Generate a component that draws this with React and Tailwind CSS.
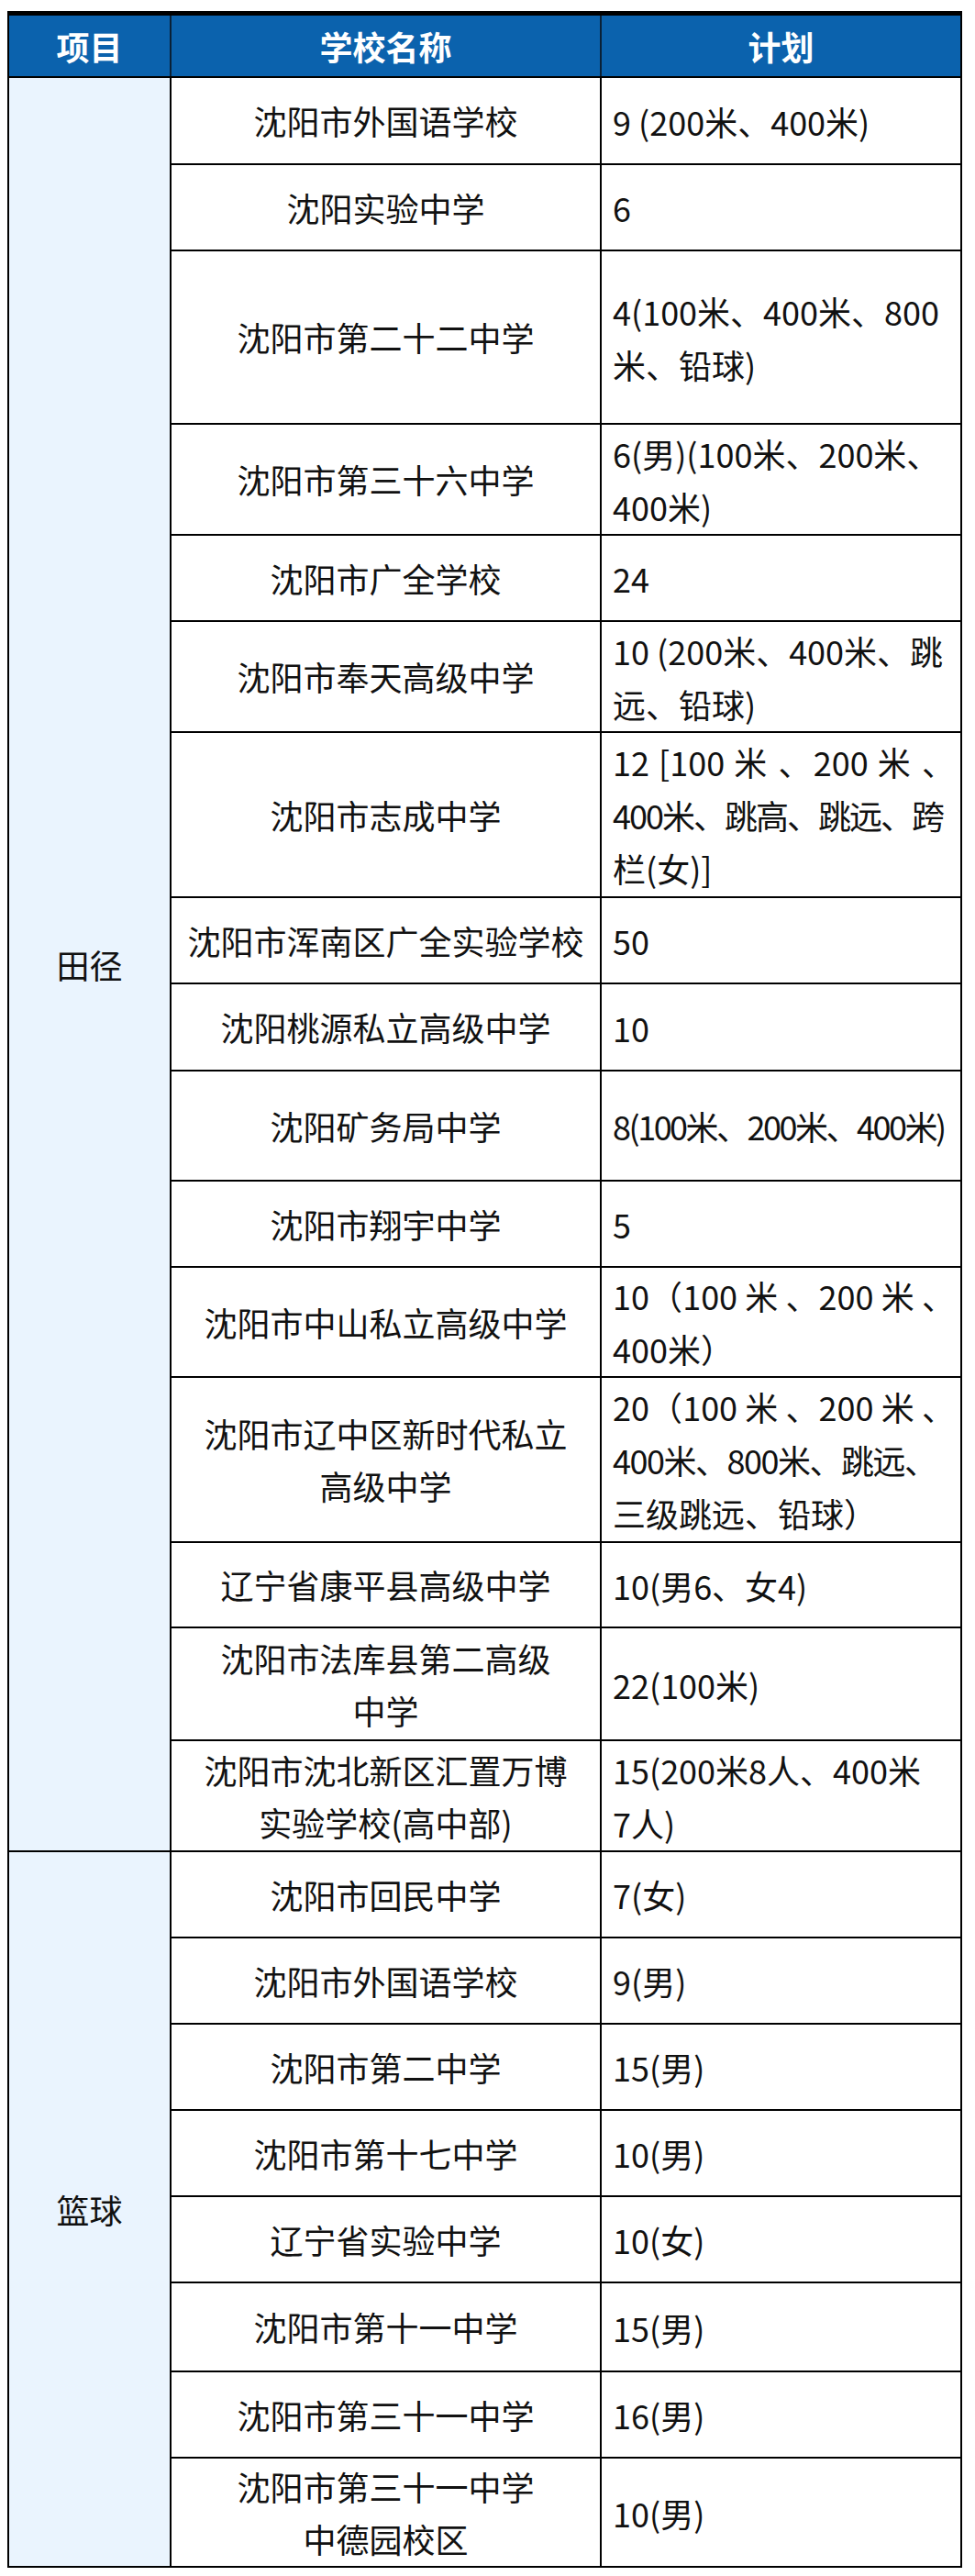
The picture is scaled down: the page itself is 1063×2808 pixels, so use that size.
// 2024 沈阳 体育特长生 招生计划表
const trackRows = [
  { h: 'h-[95px]', school: ['沈阳市外国语学校'], plan: ['9 (200米、400米)'] },
  { h: 'h-[94px]', school: ['沈阳实验中学'], plan: ['6'] },
  { h: 'h-[189px]', school: ['沈阳市第二十二中学'], plan: ['4(100米、400米、800', '米、铅球)'] },
  { h: 'h-[121px]', school: ['沈阳市第三十六中学'], plan: ['6(男)(100米、200米、', '400米)'] },
  { h: 'h-[94px]', school: ['沈阳市广全学校'], plan: ['24'] },
  { h: 'h-[121px]', school: ['沈阳市奉天高级中学'], plan: ['10 (200米、400米、跳', '远、铅球)'] },
  {
    h: 'h-[180px]',
    school: ['沈阳市志成中学'],
    plan: [['12 [100 米 、200 米 、', 'text-justify [text-align-last:justify]'], ['400米、跳高、跳远、跨', 'tracking-[-2px]'], '栏(女)]'],
  },
  { h: 'h-[94px]', school: ['沈阳市浑南区广全实验学校'], plan: ['50'] },
  { h: 'h-[95px]', school: ['沈阳桃源私立高级中学'], plan: ['10'] },
  { h: 'h-[120px]', school: ['沈阳矿务局中学'], plan: [['8(100米、200米、400米)', 'tracking-[-2.5px]']] },
  { h: 'h-[94px]', school: ['沈阳市翔宇中学'], plan: ['5'] },
  {
    h: 'h-[120px]',
    school: ['沈阳市中山私立高级中学'],
    plan: [['10（100 米 、200 米 、', 'text-justify [text-align-last:justify]'], '400米）'],
  },
  {
    h: 'h-[180px]',
    school: ['沈阳市辽中区新时代私立', '高级中学'],
    plan: [
      ['20（100 米 、200 米 、', 'text-justify [text-align-last:justify]'],
      ['400米、800米、跳远、', 'tracking-[-1.5px]'],
      '三级跳远、铅球）',
    ],
  },
  { h: 'h-[93px]', school: ['辽宁省康平县高级中学'], plan: ['10(男6、女4)'] },
  { h: 'h-[123px]', school: ['沈阳市法库县第二高级', '中学'], plan: ['22(100米)'] },
  { h: 'h-[121px]', school: ['沈阳市沈北新区汇置万博', '实验学校(高中部)'], plan: ['15(200米8人、400米', '7人)'] },
];

const basketballRows = [
  { h: 'h-[94px]', school: ['沈阳市回民中学'], plan: ['7(女)'] },
  { h: 'h-[94px]', school: ['沈阳市外国语学校'], plan: ['9(男)'] },
  { h: 'h-[94px]', school: ['沈阳市第二中学'], plan: ['15(男)'] },
  { h: 'h-[94px]', school: ['沈阳市第十七中学'], plan: ['10(男)'] },
  { h: 'h-[94px]', school: ['辽宁省实验中学'], plan: ['10(女)'] },
  { h: 'h-[97px]', school: ['沈阳市第十一中学'], plan: ['15(男)'] },
  { h: 'h-[94px]', school: ['沈阳市第三十一中学'], plan: ['16(男)'] },
  { h: 'h-[119px]', school: ['沈阳市第三十一中学', '中德园校区'], plan: ['10(男)'] },
];

const Row = ({ row }) => (
  <div className={`flex ${row.h} border-b-2 border-black`}>
    <div className="w-[469px] shrink-0 border-r-2 border-black flex flex-col items-center justify-center leading-[57px]">
      {row.school.map((line) => (
        <div key={line} className="whitespace-nowrap">{line}</div>
      ))}
    </div>
    <div className="flex-1 min-w-0 overflow-hidden pl-[12px] pr-[6px] flex flex-col justify-center leading-[58px]">
      {row.plan.map((line) => {
        const [text, cls] = Array.isArray(line) ? line : [line, ''];
        return (
          <div key={text} className={`whitespace-nowrap ${cls}`}>
            {text}
          </div>
        );
      })}
    </div>
  </div>
);

const Group = ({ label, rows }) => (
  <div className="flex">
    <div className="w-[177px] shrink-0 border-r-2 border-b-2 border-black bg-[#eaf4fe] flex items-center justify-center">
      {label}
    </div>
    <div className="flex-1 min-w-0 flex flex-col bg-white">
      {rows.map((row, i) => (
        <Row key={i} row={row} />
      ))}
    </div>
  </div>
);

export default function App() {
  return (
    <div className="bg-white min-h-[2808px] pt-[12px] pl-[8px] font-['Noto_Sans_CJK_SC','Noto_Sans',sans-serif] text-[36px] text-[#111]">
      <div className="w-[1041px] border-x-2 border-black overflow-hidden">
        {/* Header */}
        <div className="flex h-[73px] border-t-[5px] border-b-2 border-black bg-[#0b62ad] text-white font-bold">
          <div className="w-[177px] shrink-0 border-r-2 border-[#0a2036] flex items-center justify-center">项目</div>
          <div className="w-[469px] shrink-0 border-r-2 border-[#0a2036] flex items-center justify-center">学校名称</div>
          <div className="flex-1 flex items-center justify-center">计划</div>
        </div>

        <Group label="田径" rows={trackRows} />
        <Group label="篮球" rows={basketballRows} />
      </div>
    </div>
  );
}
